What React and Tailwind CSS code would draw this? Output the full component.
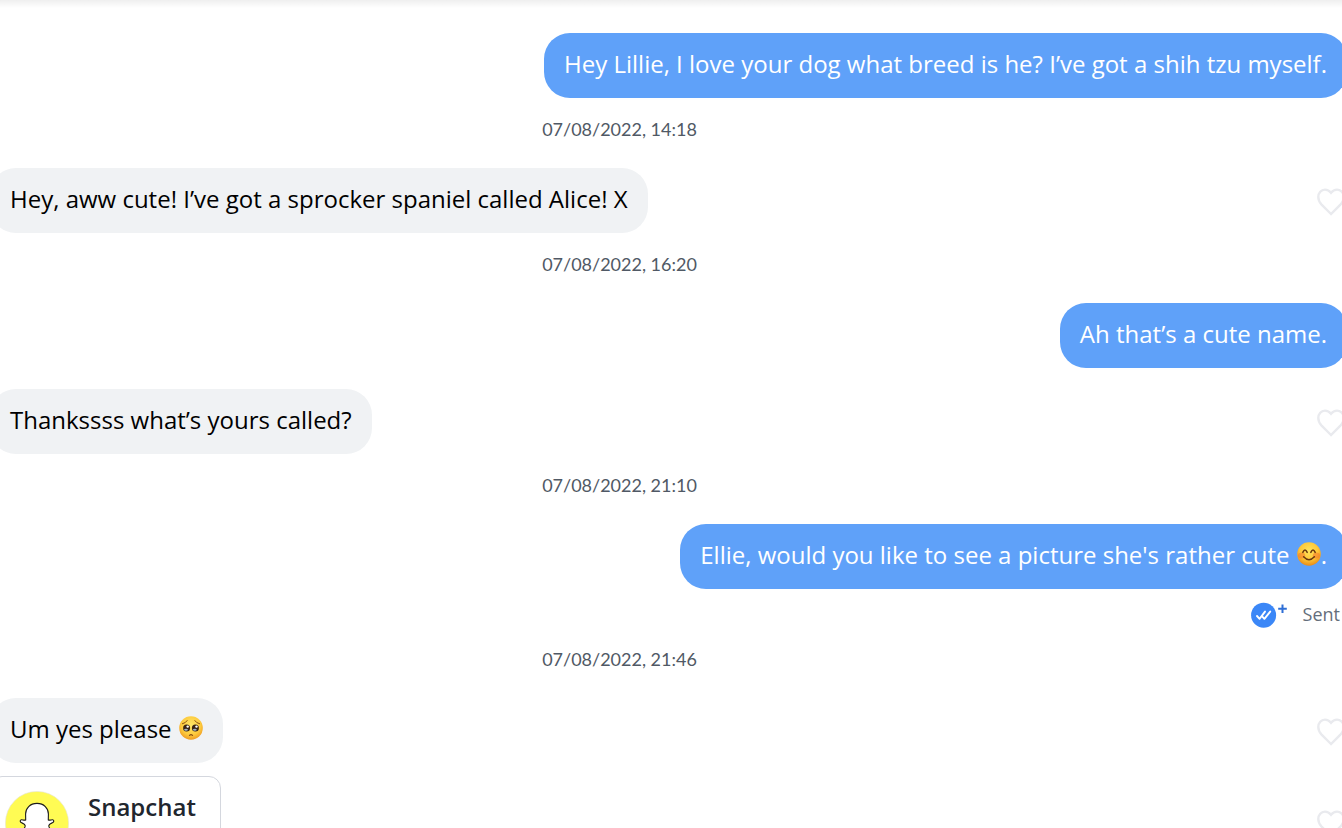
import React from 'react';

const thread = [
    { id: 1, type: 'sent', text: 'Hey Lillie, I love your dog what breed is he? I’ve got a shih tzu myself.' },
    { id: 2, type: 'date', text: '07/08/2022, 14:18' },
    { id: 3, type: 'received', text: 'Hey, aww cute! I’ve got a sprocker spaniel called Alice! X' },
    { id: 4, type: 'date', text: '07/08/2022, 16:20' },
    { id: 5, type: 'sent', text: 'Ah that’s a cute name.' },
    { id: 6, type: 'received', text: 'Thankssss what’s yours called?', spaced: true },
    { id: 7, type: 'date', text: '07/08/2022, 21:10' },
    { id: 8, type: 'sent', text: 'Ellie, would you like to see a picture she\'s rather cute ', emoji: 'smile', after: '.' },
    { id: 9, type: 'status', text: 'Sent' },
    { id: 10, type: 'date', text: '07/08/2022, 21:46' },
    { id: 11, type: 'received', text: 'Um yes please ', emoji: 'pleading' },
];

// ---------- Emoji ----------
const SmileEmoji = () => (
    <svg role="img" aria-label="😊" viewBox="0 0 24 24" className="-mt-2 ml-px inline-block h-6 w-6">
        <defs>
            <radialGradient id="smileFace" cx="50%" cy="36%" r="64%">
                <stop offset="0%" stopColor="#ffe45c" />
                <stop offset="60%" stopColor="#fec738" />
                <stop offset="100%" stopColor="#ea8a18" />
            </radialGradient>
        </defs>
        <circle cx="12" cy="12" r="11.8" fill="url(#smileFace)" />
        <ellipse cx="4.6" cy="13.6" rx="3.6" ry="3" fill="#f4702c" opacity="0.5" />
        <ellipse cx="19.4" cy="13.6" rx="3.6" ry="3" fill="#f4702c" opacity="0.5" />
        <g fill="none" stroke="#69370f" strokeWidth="1.5" strokeLinecap="round" strokeLinejoin="round">
            <path d="M5.8 10.4 Q8 5.6 10.2 10.4" />
            <path d="M13.8 10.4 Q16 5.6 18.2 10.4" />
            <path d="M6.6 14.8 Q12 20.6 17.4 14.8" />
        </g>
    </svg>
);

const PleadingEmoji = () => (
    <svg role="img" aria-label="🥺" viewBox="0 0 24 24" className="-mt-2 ml-px inline-block h-6 w-6">
        <defs>
            <radialGradient id="pleadFace" cx="50%" cy="38%" r="62%">
                <stop offset="0%" stopColor="#ffe768" />
                <stop offset="65%" stopColor="#fdcb3e" />
                <stop offset="100%" stopColor="#ef9a22" />
            </radialGradient>
        </defs>
        <circle cx="12" cy="12" r="11.8" fill="url(#pleadFace)" />
        <g fill="none" stroke="#8a4f14" strokeWidth="1" strokeLinecap="round">
            <path d="M3.4 7.8 Q6.8 7 8.2 4.6" />
            <path d="M20.6 7.8 Q17.2 7 15.8 4.6" />
            <path d="M10.5 19.4 Q12 17.9 13.5 19.4" strokeWidth="1.3" />
        </g>
        <circle cx="7.6" cy="12" r="3.5" fill="#3a2413" />
        <circle cx="16.4" cy="12" r="3.5" fill="#3a2413" />
        <circle cx="8.7" cy="10.6" r="1.2" fill="#fff" />
        <circle cx="17.5" cy="10.6" r="1.2" fill="#fff" />
        <ellipse cx="7" cy="13.8" rx="1.9" ry="1" fill="#9fb4c8" />
        <ellipse cx="15.8" cy="13.8" rx="1.9" ry="1" fill="#9fb4c8" />
    </svg>
);

const emojis = { smile: SmileEmoji, pleading: PleadingEmoji };

// ---------- Icons ----------
const LikeButton = () => (
    <button type="button" aria-label="Like message" className="mt-[2px] shrink-0">
        <svg viewBox="0 0 28 28" className="block h-7 w-7" fill="none" stroke="#e9eaee" strokeWidth="2.4">
            <path d="M14 26 L4.6 16.6 C2.4 14.3 1.3 12 1.3 9 C1.3 4.8 4.2 1.6 8 1.6 C10.6 1.6 12.4 2.7 14 4.8 C15.6 2.7 17.4 1.6 20 1.6 C23.8 1.6 26.7 4.8 26.7 9 C26.7 12 25.6 14.3 23.4 16.6 Z" />
        </svg>
    </button>
);

const ReadReceiptIcon = () => (
    <svg viewBox="0 0 37 26" className="h-[26px] w-[37px]" fill="none" aria-hidden="true">
        <circle cx="12.6" cy="13.2" r="12.5" fill="#3b87f7" />
        <g stroke="#fff" strokeWidth="1.9" strokeLinecap="round" strokeLinejoin="round">
            <path d="M6 14 L8.6 16.8 L14 9.6" />
            <path d="M11.6 14.8 L13.4 16.8 L19.2 9.6" />
        </g>
        <path d="M31.5 2.5 V11 M27.2 6.8 H35.8" stroke="#2f6fd6" strokeWidth="2" />
    </svg>
);

const SnapchatLogo = () => (
    <svg viewBox="0 0 64 64" className="h-16 w-16 shrink-0" role="img" aria-label="Snapchat logo">
        <circle cx="32" cy="32" r="31.6" fill="#fffb54" stroke="#e4e4dc" strokeWidth="0.6" />
        <path
            d="M32 12.4 C25 12.4 20.6 17.2 20.6 23 L20.7 28.9 C19.2 29.7 17.6 28.6 16.3 28.8 C14.8 29.2 14.9 30.8 16.2 31.6 C17.6 32.4 20.6 32.9 20.2 35.2 C19.2 38.6 16 41.4 12.6 42.2 C11.6 42.6 12 43.8 13.2 44.4 C14.8 45.2 17 45 17.4 46.4 C17.6 47.4 17.6 48 18.8 48 C20.6 48 22.6 47 25 48.4 C27 49.8 29 51.4 32 51.4 C35 51.4 37 49.8 39 48.4 C41.4 47 43.4 48 45.2 48 C46.4 48 46.4 47.4 46.6 46.4 C47 45 49.2 45.2 50.8 44.4 C52 43.8 52.4 42.6 51.4 42.2 C48 41.4 44.8 38.6 43.8 35.2 C43.4 32.9 46.4 32.4 47.8 31.6 C49.1 30.8 49.2 29.2 47.7 28.8 C46.4 28.6 44.8 29.7 43.3 28.9 L43.4 23 C43.4 17.2 39 12.4 32 12.4 Z"
            fill="#fff"
            stroke="#1c1c1c"
            strokeWidth="1.1"
        />
    </svg>
);

// ---------- Thread items ----------
const Bubble = ({ item }) => {
    const Emoji = item.emoji ? emojis[item.emoji] : null;
    return (
        <p
            className={`rounded-[26px] px-5 pt-[15px] pb-[18px] text-2xl leading-8 ${item.type === 'sent'
                ? 'bg-[#5fa1f9] text-white'
                : 'bg-[#f0f2f4] text-black'
                }`}
        >
            {item.text}
            {Emoji && <Emoji />}
            {item.after}
        </p>
    );
};

const ThreadItem = ({ item }) => {
    if (item.type === 'date') {
        return (
            <li className="pt-[18px] pb-[26px] pr-[98px] text-center font-['Lato','Liberation_Sans',sans-serif] text-lg leading-[26px] text-[#505965]">
                <time>{item.text}</time>
            </li>
        );
    }
    if (item.type === 'status') {
        return (
            <li className="flex items-center justify-end gap-[15px] pt-3 pr-[7px] text-lg leading-[27px] text-[#656e7b]">
                <ReadReceiptIcon />
                <span>{item.text}</span>
            </li>
        );
    }
    if (item.type === 'sent') {
        return (
            <li className="flex justify-end">
                <Bubble item={item} />
            </li>
        );
    }
    return (
        <li className={`flex items-center justify-between pr-[2px] ${item.spaced ? 'mt-[21px]' : ''}`}>
            <Bubble item={item} />
            <LikeButton />
        </li>
    );
};

const App = () => {
    return (
        <main className="h-screen overflow-hidden bg-white font-['Open_Sans','Liberation_Sans',sans-serif]">
            <div className="h-2 bg-linear-to-b from-[#efefef] to-white" />
            <ul className="-mr-[5px] -ml-[10px] pt-[25px]">
                {thread.map(item => (
                    <ThreadItem key={item.id} item={item} />
                ))}

                {/* Shared contact card */}
                <li className="mt-[13px] flex items-center justify-between pr-[2px]">
                    <a
                        href="#snapchat"
                        className="flex items-start gap-[19px] rounded-xl border border-[#d4d7de] py-[14px] pr-6 pl-[14px]"
                    >
                        <SnapchatLogo />
                        <span className="text-2xl leading-8 font-semibold text-[#21262e]">Snapchat</span>
                    </a>
                    <LikeButton />
                </li>
            </ul>
        </main>
    );
};

export default App;
